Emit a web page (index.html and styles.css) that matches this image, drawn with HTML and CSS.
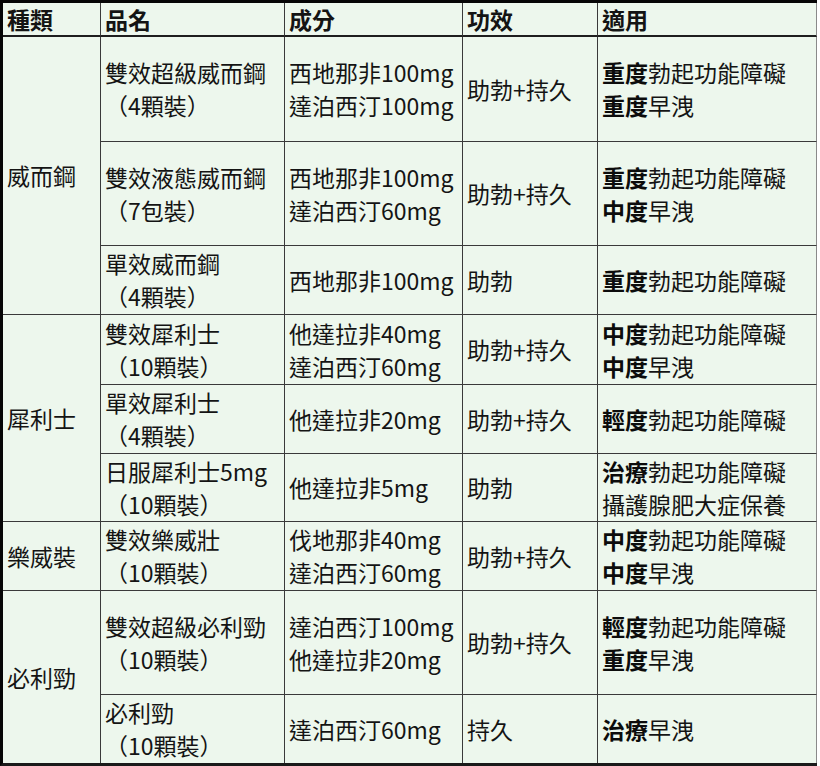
FILE: index.html
```html
<!DOCTYPE html>
<html lang="zh-Hant">
<head>
<meta charset="utf-8">
<title>產品比較</title>
<link rel="stylesheet" href="styles.css">
</head>
<body>
<table class="grid">
  <thead>
    <tr class="h-head">
      <th class="c0">種類</th>
      <th class="c1">品名</th>
      <th class="c2">成分</th>
      <th class="c3">功效</th>
      <th class="c4">適用</th>
    </tr>
  </thead>
  <tbody>
    <tr class="h-105">
      <td rowspan="3">威而鋼</td>
      <td>雙效超級威而鋼<br>（4顆裝）</td>
      <td>西地那非100mg<br>達泊西汀100mg</td>
      <td>助勃+持久</td>
      <td class="last"><b>重度</b>勃起功能障礙<br><b>重度</b>早洩</td>
    </tr>
    <tr class="h-104">
      <td>雙效液態威而鋼<br>（7包裝）</td>
      <td>西地那非100mg<br>達泊西汀60mg</td>
      <td>助勃+持久</td>
      <td class="last"><b>重度</b>勃起功能障礙<br><b>中度</b>早洩</td>
    </tr>
    <tr class="h-69">
      <td>單效威而鋼<br>（4顆裝）</td>
      <td>西地那非100mg</td>
      <td>助勃</td>
      <td class="last"><b>重度</b>勃起功能障礙</td>
    </tr>
    <tr class="h-70">
      <td rowspan="3">犀利士</td>
      <td>雙效犀利士<br>（10顆裝）</td>
      <td>他達拉非40mg<br>達泊西汀60mg</td>
      <td>助勃+持久</td>
      <td class="last"><b>中度</b>勃起功能障礙<br><b>中度</b>早洩</td>
    </tr>
    <tr class="h-69">
      <td>單效犀利士<br>（4顆裝）</td>
      <td>他達拉非20mg</td>
      <td>助勃+持久</td>
      <td class="last"><b>輕度</b>勃起功能障礙</td>
    </tr>
    <tr class="h-68">
      <td>日服犀利士5mg<br>（10顆裝）</td>
      <td>他達拉非5mg</td>
      <td>助勃</td>
      <td class="last"><b>治療</b>勃起功能障礙<br>攝護腺肥大症保養</td>
    </tr>
    <tr class="h-69">
      <td>樂威裝</td>
      <td>雙效樂威壯<br>（10顆裝）</td>
      <td>伐地那非40mg<br>達泊西汀60mg</td>
      <td>助勃+持久</td>
      <td class="last"><b>中度</b>勃起功能障礙<br><b>中度</b>早洩</td>
    </tr>
    <tr class="h-104">
      <td rowspan="2" class="end">必利勁</td>
      <td>雙效超級必利勁<br>（10顆裝）</td>
      <td>達泊西汀100mg<br>他達拉非20mg</td>
      <td>助勃+持久</td>
      <td class="last"><b>輕度</b>勃起功能障礙<br><b>重度</b>早洩</td>
    </tr>
    <tr class="h-68">
      <td class="end">必利勁<br>（10顆裝）</td>
      <td class="end">達泊西汀60mg</td>
      <td class="end">持久</td>
      <td class="last end"><b>治療</b>早洩</td>
    </tr>
  </tbody>
</table>
</body>
</html>
```

FILE: styles.css
```css
html, body {
  margin: 0;
  padding: 0;
  background: #ffffff;
}

.grid {
  border-collapse: separate;
  border-spacing: 0;
  table-layout: fixed;
  width: 817px;
  background: #edf7ed;
  border-top: 3px solid #050505;
  border-left: 3px solid #050505;
  border-bottom: 3px solid #1a1a1a;
  font-family: "Noto Sans CJK TC", "Noto Sans CJK SC", "Noto Sans", sans-serif;
  font-size: 23px;
  line-height: 33px;
  color: #141414;
}

.grid th,
.grid td {
  box-sizing: border-box;
  padding: 0 0 0 4px;
  border-right: 1px solid #3a3a3a;
  border-bottom: 1px solid #3a3a3a;
  vertical-align: middle;
  text-align: left;
  white-space: nowrap;
  overflow: hidden;
}

.grid th {
  font-weight: 700;
  border-bottom: 2px solid #1e1e1e;
  line-height: 30px;
}

.grid th.c4,
.grid td.last {
  border-right-color: #8a8a8a;
}

.grid td.end {
  border-bottom: none;
}

.grid b {
  font-weight: 700;
  color: #0c0c0c;
}

.c0 { width: 98px; }
.c1 { width: 184px; }
.c2 { width: 178px; }
.c3 { width: 135px; }
.c4 { width: 219px; }

.h-head { height: 34px; }
.h-105 { height: 105px; }
.h-104 { height: 104px; }
.h-70 { height: 70px; }
.h-69 { height: 69px; }
.h-68 { height: 68px; }
```
